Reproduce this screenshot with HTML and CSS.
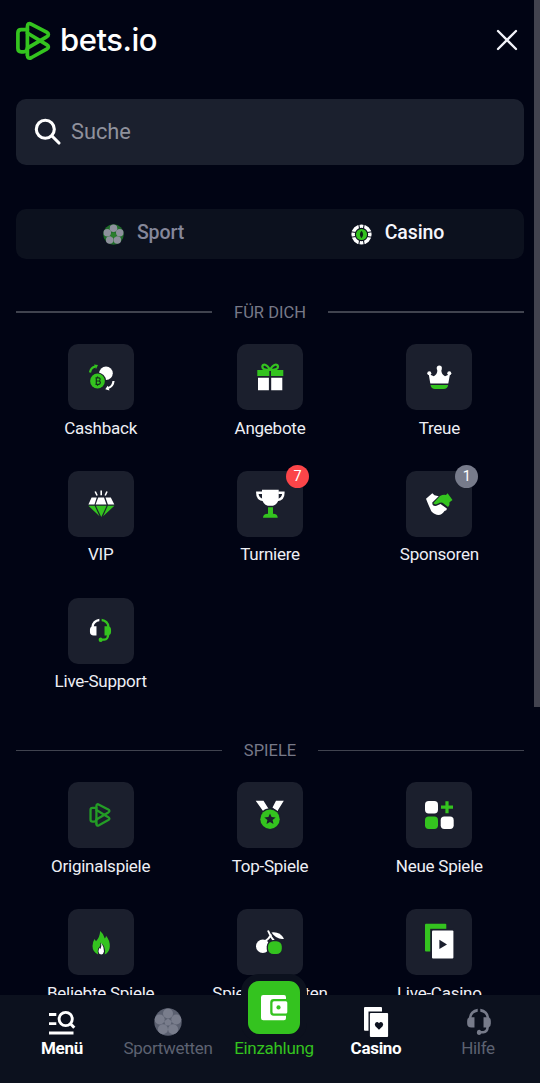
FILE: index.html
```html
<!DOCTYPE html>
<html lang="de">
<head>
<meta charset="utf-8">
<meta name="viewport" content="width=device-width, initial-scale=1">
<title>bets.io</title>
<link rel="stylesheet" href="styles.css">
</head>
<body>
<svg class="defs" aria-hidden="true">
  <symbol id="mark" viewBox="0 0 40 42">
    <g fill="none" stroke="currentColor" stroke-width="3.7" stroke-linejoin="round" stroke-linecap="round">
      <path d="M13.4 9.6H7.2Q3.9 9.6 3.9 13V28.3Q3.9 31.8 7.2 31.8H9.5Q13.4 31.8 13.4 28"/>
      <path d="M13.4 35V7Q13.4 2.2 17.6 4.3L32.6 12.2Q36.2 14.4 32.6 16.8L13.4 28.2"/>
      <path d="M13.4 13L32.6 24.6Q36.2 27 32.6 29.2L17.6 37.5Q13.4 39.6 13.4 35"/>
    </g>
  </symbol>
  <symbol id="headset" viewBox="0 0 24 26">
    <path class="a" d="M10.8.7V3.4Q5.8 4.2 5 8.6H7.8V18.2H5Q1 18 1 14.5V12Q1 9.5 2.5 9Q3.3 2 10.8.7Z"/>
    <path class="b" d="M13.2.7V3.4Q18.2 4.2 19 8.6H16.2V18.2H18.7Q18.7 21 16 21.4H13.8Q13.4 20.2 12 20.2Q10 20.4 10 22.6Q10 25 12.2 25Q13.7 25 14.2 23.7H16Q20.8 23.3 21.2 17.8Q23 17 23 14.5V12Q23 9.5 21.5 9Q20.7 2 13.2.7Z"/>
  </symbol>
  <symbol id="ball" viewBox="0 0 28 28">
    <circle class="base" cx="14" cy="14" r="13.7"/>
    <g class="panels">
      <circle cx="14" cy="5.5" r="5"/><circle cx="22.3" cy="11.5" r="5"/><circle cx="19.1" cy="21.3" r="5"/><circle cx="8.9" cy="21.3" r="5"/><circle cx="5.7" cy="11.5" r="5"/>
    </g>
    <path class="core" d="M14 10.5L17.8 13.2L16.4 17.5H11.6L10.2 13.2Z"/>
  </symbol>
</svg>

<div class="app">
  <main class="menu">
    <header class="top">
      <div class="brand"><svg class="brand-mark"><use href="#mark"/></svg><span class="brand-name">bets.io</span></div>
      <svg class="close" viewBox="0 0 22 22"><path d="M2 2L20 20M20 2L2 20"/></svg>
    </header>

    <div class="search">
      <svg class="search-icon" viewBox="0 0 28 28"><circle cx="11.3" cy="11.3" r="9"/><path d="M18 18L25 25"/></svg>
      <span>Suche</span>
    </div>

    <div class="tabs">
      <div class="tab"><svg class="tab-icon ball-green"><use href="#ball"/></svg><span>Sport</span></div>
      <div class="tab active">
        <svg class="tab-icon" viewBox="0 0 22 22">
          <circle cx="11" cy="11" r="8.8" fill="none" stroke="#fff" stroke-width="3.6"/>
          <path d="M8.1 0L9 5M13.9 0L13 5M8.1 22L9 17M13.9 22L13 17M0 8.1L5 9M0 13.9L5 13M22 8.1L17 9M22 13.9L17 13" stroke="#0c111e" stroke-width="1.1"/>
          <circle cx="11" cy="11" r="5.8" fill="#34c31f"/>
          <path d="M11 7.2Q14.4 11 11 14.8Q7.6 11 11 7.2Z" fill="#0c2417"/>
        </svg>
        <span>Casino</span>
      </div>
    </div>

    <h2 class="heading">FÜR DICH</h2>
    <div class="grid">
      <div class="item"><div class="tile"><svg viewBox="0 0 66 66">
        <circle cx="38" cy="29.2" r="6.8" class="w"/>
        <circle cx="29.5" cy="37" r="8.6" class="k"/><circle cx="29.5" cy="37" r="7.4" class="g"/>
        <path d="M27.5 33.8H30.8Q32.4 34 32 36Q31.8 37 30.8 37Q32.5 37.2 32.3 38.8Q32 40.3 30.8 40.3H27.5M28.3 33.8V40.3M28.3 37H31M29.5 32.4V33.8M29.5 40.3V41.8" fill="none" stroke="#12301a" stroke-width="1.2"/>
        <path d="M22 28.5Q22.8 23.5 27.2 22.6" fill="none" stroke="#34c31f" stroke-width="2.2"/><path d="M26 20.5L30 21L28 25Z" class="g"/>
        <path d="M45.5 37Q45 42.5 40.2 44" fill="none" stroke="#fff" stroke-width="2.2"/><path d="M41.5 46.5L37.3 45.2L39.7 41.7Z" class="w"/>
      </svg></div><span>Cashback</span></div>
      <div class="item"><div class="tile"><svg viewBox="0 0 66 66">
        <path class="g" d="M20.3 26H32.3V32.1H20.3ZM34 26H46.3V32.1H34Z"/>
        <path d="M33 26C30 19.5 25.5 19.5 25.3 22.8Q25.2 26 33 26M33 26C36 19.5 40.8 19.5 41 22.8Q41 26 33 26" fill="none" stroke="#34c31f" stroke-width="2.2"/>
        <path class="w" d="M21 33.8H31.9V46.3H21ZM34.2 33.8H45.3V46.3H34.2Z"/>
      </svg></div><span>Angebote</span></div>
      <div class="item"><div class="tile"><svg viewBox="0 0 66 66">
        <path class="w" d="M24.3 39.5L22.7 30L27.8 32.2Q31.5 30.5 31.4 25H35.3Q35.2 30.5 39 32.2L44 30L42.3 39.5Z"/>
        <circle class="w" cx="23.3" cy="29.3" r="2"/><circle class="w" cx="33.3" cy="24" r="2.6"/><circle class="w" cx="43.3" cy="29.3" r="2"/>
        <path class="g" d="M24.5 41H42.2Q41.5 45 37.5 45H29Q25.2 45 24.5 41Z"/>
      </svg></div><span>Treue</span></div>
      <div class="item"><div class="tile"><svg viewBox="0 0 66 66">
        <path class="w" d="M23.6 26.5H28.7L26.5 33.5H20.4ZM30.2 26.5H36L38.5 33.5H27.6ZM37.5 26.5H42.8L46.3 33.5H39.9Z"/>
        <path class="g" d="M20.4 34.8H26.7L31.5 45.2ZM27.9 34.8H38.6L33.3 46ZM39.8 34.8H46.4L35.1 45.2Z"/>
        <path d="M27.2 20.5L29.1 24.5M33.2 19.6V24.2M39 20.5L37.2 24.5" stroke="#fff" stroke-width="1.6"/>
      </svg></div><span>VIP</span></div>
      <div class="item"><div class="tile"><svg viewBox="0 0 66 66">
        <path class="w" d="M25 18.8H41.7V27Q41 33.5 36 34.8H30.7Q25.7 33.5 25 27Z"/>
        <path d="M25.5 21.7H20.3Q20.2 28.5 26.8 29M41.2 21.7H46.4Q46.5 28.5 40 29" fill="none" stroke="#fff" stroke-width="2.4"/>
        <path class="g" d="M31 36.2H36V42.7Q40.7 42.8 40.7 46.7H26Q26 42.8 31 42.7Z"/>
      </svg><b class="badge red">7</b></div><span>Turniere</span></div>
      <div class="item"><div class="tile"><svg viewBox="0 0 66 66">
        <path class="w" d="M20 27.8L26.3 22.3L28.5 24.3L32.7 25.3L26.3 31.6Q26 35.5 30.5 34.8L34.5 33L40.8 37.5Q41.2 39.5 38.5 40Q35.8 44 32.5 44Q29 44 25.3 40.2L22.2 33.2Z"/>
        <path class="g" d="M27.3 32.3L34 25Q37 23.4 40 24L41.6 22.3L46.5 29L43.5 31.3Q44 34 42 36L36.5 31.7Q34 31.2 32.3 32.6Q29.3 34.4 27.3 32.3Z"/>
      </svg><b class="badge gray">1</b></div><span>Sponsoren</span></div>
      <div class="item"><div class="tile"><svg class="headset-tile"><use href="#headset"/></svg></div><span>Live-Support</span></div>
    </div>

    <h2 class="heading second">SPIELE</h2>
    <div class="grid">
      <div class="item"><div class="tile"><svg class="mark-tile"><use href="#mark"/></svg></div><span>Originalspiele</span></div>
      <div class="item"><div class="tile"><svg viewBox="0 0 66 66">
        <path class="w" d="M18.7 18.8H26.5L32 27.5L26.2 29.2ZM46.8 18.8H39L35.5 25.6L40.3 29.2Z"/>
        <circle cx="33" cy="37.2" r="11" class="k"/><circle cx="33" cy="37.2" r="9.7" class="g"/>
        <path class="k" d="M33 31.4L34.6 35.1L38.7 35.5L35.6 38.1L36.5 42L33 39.9L29.5 42L30.4 38.1L27.3 35.5L31.4 35.1Z"/>
      </svg></div><span>Top-Spiele</span></div>
      <div class="item"><div class="tile"><svg viewBox="0 0 66 66">
        <rect class="w" x="19" y="19" width="13" height="12.5" rx="3.7"/><rect class="g" x="19" y="34.5" width="13" height="12.5" rx="3.7"/><rect class="w" x="34.7" y="34.5" width="13" height="12.5" rx="3.7"/>
        <path d="M41 19.2V31.2M35 25.2H47" stroke="#34c31f" stroke-width="3.2"/>
      </svg></div><span>Neue Spiele</span></div>
      <div class="item"><div class="tile"><svg viewBox="0 0 66 66">
        <path class="g" d="M32.2 22Q35.5 24.5 36.8 29.5Q38 28.5 38 26.8Q42 31.5 41.8 37.5Q41.5 43.5 36.7 45.4Q38.5 37.5 32.4 33.5Q33 37 30.3 39.3Q29 42.5 30.2 45.4Q24.5 43 24.5 37Q24.6 33 26.5 30L28 32.3Q31.7 28.5 32.2 22Z"/>
        <path class="w" d="M33.2 33.7Q36.2 38 36 42.5Q35.5 45.3 33.2 45.5Q30.8 45.3 30.5 42.7Q30.4 40.5 31.6 38.7L32.5 40Q33.8 37 33.2 33.7Z"/>
      </svg></div><span>Beliebte Spiele</span></div>
      <div class="item"><div class="tile"><svg viewBox="0 0 66 66">
        <circle class="w" cx="25.8" cy="37.2" r="6.8"/>
        <path d="M31 21.5Q33.5 28 37.5 32.5M34.3 25.5Q32 29.7 28 32.3" fill="none" stroke="#fff" stroke-width="2"/>
        <path class="w" d="M34.5 23.5Q42.8 22.3 47 29.8Q39.8 31 34.5 23.5Z"/>
        <rect x="29.7" y="31" width="16.4" height="15.4" rx="6.5" class="k"/><rect x="31" y="32.3" width="13.8" height="12.8" rx="5.3" class="g"/>
      </svg></div><span>Spielautomaten</span></div>
      <div class="item"><div class="tile"><svg viewBox="0 0 66 66">
        <rect class="g" x="19" y="14.8" width="21.3" height="27.6" rx="1"/><path class="k" d="M24.2 19.8H48V50H24.2Z"/>
        <rect class="w" x="26" y="21.4" width="21.4" height="28" rx="1"/><path class="k" d="M33.4 30.8L41 35.4L33.4 40Z"/>
      </svg></div><span>Live-Casino</span></div>
    </div>
    <div class="scrollbar"></div>
  </main>

  <nav class="nav">
    <a class="on"><svg viewBox="0 0 28 30"><path d="M1 7.5H8.3M1 16.7H8.3M1 26H25.5" fill="none" stroke="#fff" stroke-width="2.8"/><circle cx="17.7" cy="12" r="6.6" fill="none" stroke="#fff" stroke-width="2.9"/><path d="M21.8 16L26.3 20.7" stroke="#fff" stroke-width="3"/></svg><span>Menü</span></a>
    <a><svg class="ball-gray" viewBox="0 0 28 30"><use href="#ball" y="1" width="28" height="28"/></svg><span>Sportwetten</span></a>
    <a class="deposit"><i class="wallet"><svg viewBox="0 0 28 28"><path d="M3.3 1H24Q26 1 26 3.2V5H13.6Q10.2 5 10.2 8.4V18Q10.2 21.8 13.6 21.8H26V24Q26 26.3 24 26.3H3.3Q1 26.3 1 24V3.2Q1 1 3.3 1Z" fill="#fff"/><rect x="12.5" y="7.2" width="14.8" height="12.3" rx="1.5" fill="#fff"/><circle cx="18.5" cy="13.4" r="2.1" fill="#34c31f"/></svg></i><span>Einzahlung</span></a>
    <a class="on"><svg viewBox="0 0 28 30"><rect x="2" y="0" width="18" height="23.7" rx="1" fill="#fff"/><path d="M6.5 4.5H27V30H6.5Z" fill="#0c111e"/><rect x="7.9" y="5.9" width="18.2" height="24.1" rx="1" fill="#fff"/><path d="M17 22.8L13.4 19.3Q12 17.2 13.7 15.6Q15.5 14.3 17 16.3Q18.5 14.3 20.3 15.6Q22 17.2 20.6 19.3Z" fill="#0c111e"/></svg><span>Casino</span></a>
    <a><svg class="headset-gray" viewBox="0 0 28 30"><use href="#headset" x="1" y="1" width="28" height="28"/></svg><span>Hilfe</span></a>
  </nav>
</div>
</body>
</html>
```

FILE: styles.css
```css
* { box-sizing: border-box; }
body { margin: 0; background: #010414; color: #eeeff5; font-family: Roboto, "Liberation Sans", sans-serif; }
.defs { position: absolute; width: 0; height: 0; }
.app { display: flex; flex-direction: column; height: 1083px; overflow: hidden; }
.menu { position: relative; height: 995px; flex: none; overflow: hidden; padding: 0 16px; }
.scrollbar { position: absolute; top: 0; right: 0; width: 6px; height: 707px; background: #42434f; }

.top { display: flex; justify-content: space-between; align-items: center; height: 99px; padding: 0 6px 19px 0; }
.brand { display: flex; align-items: center; gap: 6px; margin-left: -2px; }
.brand-mark { width: 40px; height: 42px; margin-top: 2px; color: #34c31f; }
.brand-name { font: 500 31px/40px Inter, sans-serif; letter-spacing: -0.45px; color: #fff; }
.close { width: 22px; height: 22px; fill: none; stroke: #f2f3fa; stroke-width: 2.3; stroke-linecap: round; }

.search { display: flex; align-items: center; gap: 9px; height: 66px; padding: 0 0 1px 18px; border-radius: 10px; background: #1b202e; color: #8f919c; font-size: 21.8px; }
.search-icon { width: 28px; height: 28px; margin-top: 1px; fill: none; stroke: #fff; stroke-width: 3.1; stroke-linecap: round; }

.tabs { display: grid; grid-template-columns: 1fr 1fr; height: 50px; margin-top: 44px; border-radius: 10px; background: #0c111e; }
.tab { display: flex; align-items: center; justify-content: center; gap: 13px; padding: 0 0 3px 1px; color: #85879a; font-size: 19.5px; font-weight: 500; letter-spacing: -0.1px; }
.tab.active { color: #f5f6fc; }
.tab-icon { width: 21px; height: 21px; margin-top: 3px; }
.ball-green { --base: #216c2b; --panel: #8e909c; --core: #2a7e2b; }
.ball-gray { --base: #5b6070; --panel: #797d8c; --core: #797d8c; }
.base { fill: var(--base); }
.panels { fill: var(--panel); }
.core { fill: var(--core); }

.heading { display: flex; align-items: center; gap: 22px; height: 24px; margin: 41px 0 20px; color: #777988; font-size: 16.5px; font-weight: 400; }
.heading::before, .heading::after { content: ""; flex: 1; height: 1.4px; background: #40434f; }
.heading.second { margin: 40px 0 20px; }

.grid { display: grid; grid-template-columns: repeat(3, 1fr); row-gap: 26px; }
.item { display: flex; flex-direction: column; align-items: center; height: 100.8px; white-space: nowrap; font-size: 17px; line-height: 20px; letter-spacing: -0.25px; gap: 7.5px; }
.tile { position: relative; display: grid; place-items: center; flex: none; width: 66px; height: 66px; border-radius: 10px; background: #1b1f2d; }
.tile svg { width: 66px; height: 66px; }
.tile .headset-tile { width: 23px; height: 25px; }
.tile .mark-tile { width: 25px; height: 26px; color: #249d26; }
.w { fill: #fff; }
.g { fill: #34c31f; }
.k { fill: #1b1f2d; }
.a { fill: var(--cup-left, #fff); }
.b { fill: var(--cup-right, #34c31f); }
.badge { position: absolute; top: -6px; right: -6px; width: 23px; height: 23px; border-radius: 50%; color: #fff; font-size: 14.5px; font-weight: 400; line-height: 23px; text-align: center; }
.red { background: #fb4549; }
.gray { background: #777b8b; }

.nav { position: relative; display: grid; grid-template-columns: 104px 108px 104px 100px 104px; flex: none; height: 88px; padding: 12px 10px 0; background: #0c111e; color: #5d6271; font-size: 17px; line-height: 20px; letter-spacing: -0.3px; }
.nav a { display: flex; flex-direction: column; align-items: center; gap: 1px; }
.nav a > svg { width: 28px; height: 30px; }
.nav .on { color: #fff; font-weight: 700; }
.headset-gray { --cup-left: #777b8a; --cup-right: #777b8a; }
.nav .deposit { color: #34c31f; }
.wallet { display: grid; place-items: center; width: 66px; height: 67px; margin-top: -33px; margin-bottom: -4px; border: 7px solid #0c111e; border-radius: 18px; background: #34c31f; }
.wallet svg { width: 28px; height: 28px; }
```
